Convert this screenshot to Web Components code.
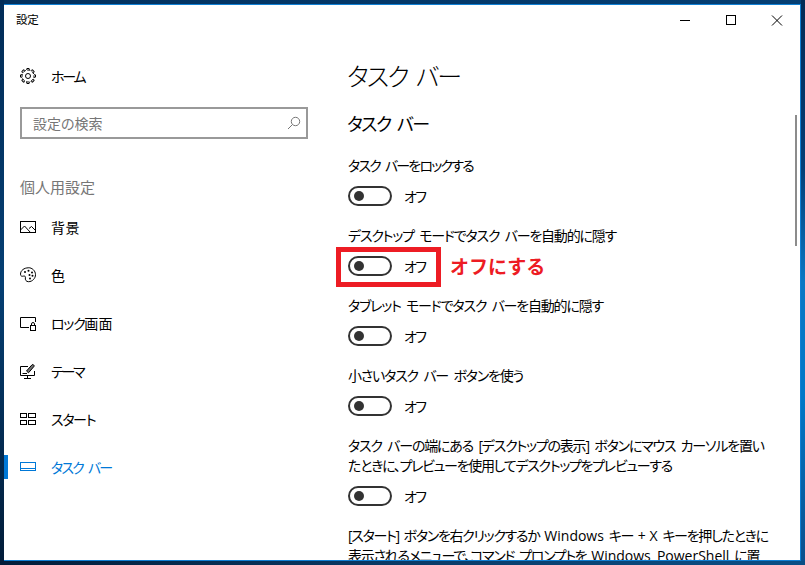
<!DOCTYPE html>
<html lang="ja"><head><meta charset="utf-8">
<style>
html,body{margin:0;height:100%;overflow:hidden}
body{font-family:"Open Sans","Noto Sans CJK JP","Liberation Sans",sans-serif;font-feature-settings:"palt";color:#000}
</style></head><body>
<settings-desktop>
  <settings-window>
    <settings-nav slot="nav"></settings-nav>
    <settings-content slot="content"></settings-content>
  </settings-window>
</settings-desktop>
<script>
const def=(n,html)=>customElements.define(n,class extends HTMLElement{constructor(){super();this.attachShadow({mode:'open'}).innerHTML=typeof html==='function'?html(this):html}});

def('settings-desktop',`<style>:host{display:block;width:805px;height:565px;box-sizing:border-box;padding:4px;position:relative;
background:linear-gradient(90deg,#03315e 0,#053f73 100%)}
.r{position:absolute;right:0;top:0;width:4px;height:565px;background:linear-gradient(180deg,#022c57 0,#023f78 30%,#0a78c4 50%,#0078c8 70%,#0a4f8c 100%)}
.b{position:absolute;left:0;top:561px;width:805px;height:4px;background:linear-gradient(90deg,#021c38,#0a3a66 50%,#0a4f86)}
.l{position:absolute;left:0;top:0;width:4px;height:565px;background:linear-gradient(180deg,#022c57,#053f73 50%,#021c38)}
</style><slot></slot><div class="r"></div><div class="b"></div><div class="l"></div>`);

def('settings-window',`<style>:host{display:grid;grid-template-columns:328px 1fr;grid-template-rows:28px 1fr;height:100%;box-sizing:border-box;background:#fff;border:1px solid #0f7fd3;border-width:1px 1px 1px 0;overflow:hidden;position:relative;width:797px}
.title{grid-column:1/3;display:flex;align-items:center;justify-content:space-between;padding-left:12px;height:28px}
.title span{font-size:11.500px;letter-spacing:-.2px}
.btns{display:flex;align-self:flex-start}
.btns svg{width:46px;height:30px;display:block}
.scroll{position:absolute;right:3px;top:110px;width:2px;height:131px;background:#8c8c8c}
main{display:block;overflow:hidden;min-height:0}
</style>
<div class="title"><span>設定</span><div class="btns">
<svg viewBox="0 0 46 30"><path d="M18 15.500h10" stroke="#000" fill="none"/></svg>
<svg viewBox="0 0 46 30"><rect x="18.500" y="10.500" width="9" height="9" stroke="#000" fill="none"/></svg>
<svg viewBox="0 0 46 30"><path d="M18 10.500l10 10M28 10.500l-10 10" stroke="#000" fill="none"/></svg>
</div></div>
<slot name="nav"></slot><main><slot name="content"></slot></main><div class="scroll"></div>`);

const teeth=[0,45,90,135,180,225,270,315].map(a=>`<path transform="rotate(${a} 8 8)" d="M6.500 1.800L6.900.5h2.200l.4 1.300"/>`).join('');
const icons={
home:`<g fill="none" stroke="#000"><circle cx="8" cy="8" r="2.500"/><circle cx="8" cy="8" r="6" stroke-dasharray="3.400 1.310" stroke-dashoffset="1.700"/>${teeth}</g>`,
bg:`<g fill="none" stroke="#000"><rect x=".5" y="2.500" width="15" height="11"/><path d="M.5 11l4-4 6 6.500M9 9.500l2.500-2 4 4"/></g>`,
color:`<g fill="none" stroke="#000"><path d="M8.500 .8C4 .8.5 3.500.5 7.200c0 2 1.500 2.300 3 1.900 1.300-.3 2.300.4 1.900 1.700-.5 1.900.7 3.900 3.100 3.900 4 0 7-3.500 7-7 0-4-3.500-7-7-7z"/></g><g fill="#000"><circle cx="5" cy="5" r="1"/><circle cx="8.500" cy="3.800" r="1"/><circle cx="12" cy="5.500" r="1"/><circle cx="12.500" cy="8.800" r="1"/><circle cx="9.500" cy="8" r="1"/><circle cx="10" cy="11.500" r="1"/></g>`,
lock:`<g fill="none" stroke="#000"><path d="M9 12.500H.5v-10h15V7"/><rect x="10.500" y="10.500" width="5" height="5"/><path d="M11.500 10.500V9a1.500 1.500 0 013 0v1.500"/></g>`,
theme:`<g fill="none" stroke="#000"><path d="M8 3.500H.5v9h14V8M7.500 12.500v2.500M4 15.500h7"/><path d="M6.500 8L12 1.800c.8-.9 2.700.6 2 1.600L8.500 9.800z" fill="#000" fill-opacity=".55"/><path d="M2.500 10.500h4.500"/></g>`,
start:`<g fill="none" stroke="#000"><rect x=".5" y="2.500" width="6" height="4"/><rect x="8.500" y="2.500" width="7" height="4"/><rect x=".5" y="9.500" width="6" height="4"/><rect x="8.500" y="9.500" width="7" height="4"/></g>`,
taskbar:`<g fill="none" stroke="#0078d7"><rect x=".5" y="3.500" width="15" height="8"/><path d="M.5 9.500h15"/></g>`
};
def('nav-item',el=>`<style>:host{display:flex;align-items:center;height:48px;position:relative;padding-left:16px;font-size:14px;letter-spacing:-1.300px;word-spacing:3px;color:#000;white-space:nowrap}
svg{width:16px;height:16px;margin-right:15px;flex:none}
:host([active]){color:#0078d7;letter-spacing:-1.800px}
:host([active])::before{content:"";position:absolute;left:0;top:12px;width:4px;height:24px;background:#0078d7}
:host([tight]){letter-spacing:-2.200px}
</style><svg viewBox="0 0 16 16">${icons[el.getAttribute('icon')]}</svg><slot></slot>`);

def('search-box',`<style>:host{display:flex;align-items:center;justify-content:space-between;box-sizing:border-box;width:288px;height:32px;border:2px solid #999;padding:0 5px 0 11px;font-size:14px;color:#767676}
svg{width:14px;height:14px}</style><slot></slot><svg viewBox="0 0 14 14" fill="none" stroke="#767676"><circle cx="8.500" cy="5.500" r="4.200"/><path d="M5.500 8.500L1 13"/></svg>`);

def('settings-nav',`<style>:host{display:block;font-feature-settings:"palt"}
.s{margin:7px 0 0 16px}
h2{font-weight:400;font-size:15px;color:#767676;margin:38px 0 0 16px;line-height:20px}
.home{margin-top:19px}
.list{margin-top:6px;display:block}
</style>
<nav-item class="home" icon="home" tight>ホーム</nav-item>
<search-box class="s">設定の検索</search-box>
<h2>個人用設定</h2>
<div class="list">
<nav-item icon="bg"><span style="letter-spacing:.5px">背景</span></nav-item>
<nav-item icon="color">色</nav-item>
<nav-item icon="lock">ロック<span style="letter-spacing:.2px">画面</span></nav-item>
<nav-item icon="theme" tight>テーマ</nav-item>
<nav-item icon="start">スタート</nav-item>
<nav-item icon="taskbar" active>タスク バー</nav-item>
</div>`);

def('toggle-row',`<style>:host{display:block;font-size:14px;line-height:20px;font-feature-settings:"palt";letter-spacing:-1.200px;word-spacing:3px;white-space:nowrap}
.l{display:block}
.t{display:flex;align-items:center;margin-top:10px;height:20px;position:relative}
.sw{box-sizing:border-box;width:44px;height:20px;border:2px solid #333;border-radius:10px;display:flex;align-items:center;padding-left:4px}
.sw i{width:10px;height:10px;border-radius:50%;background:#333}
.o{margin:1px 0 0 12px;letter-spacing:-1.500px}
</style><span class="l"><slot></slot></span><div class="t"><span class="sw"><i></i></span><span class="o">オフ</span><slot name="note"></slot></div>`);

def('call-out',`<style>:host{position:absolute;left:-12px;top:-9px;width:105px;height:40px;box-sizing:border-box;border:5px solid #ed1c24;display:block}
span{position:absolute;left:109px;top:1px;white-space:nowrap;color:#ed1c24;font-weight:700;font-size:19px;line-height:28px;letter-spacing:0;word-spacing:0;font-feature-settings:normal}
</style><span><slot></slot></span>`);

def('settings-content',`<style>:host{display:block;font-feature-settings:"palt"}
h1{font-weight:300;font-size:25px;line-height:40px;margin:23px 0 0 15px;letter-spacing:-2.100px;word-spacing:4px}
h2{font-weight:400;font-size:18px;line-height:28px;margin:14px 0 0 15px;letter-spacing:-1.500px;word-spacing:3px}
.rows{margin:18px 0 0 16px;width:440px;display:grid;gap:20px}
.cut{font-size:14px;line-height:20px;letter-spacing:-1.300px;word-spacing:2.500px;white-space:nowrap}
b{font-weight:400;letter-spacing:0}
i{font-style:normal;letter-spacing:-1.300px}
.a{letter-spacing:-1.800px}
</style>
<h1>タスク バー</h1><h2>タスク バー</h2>
<div class="rows">
<toggle-row><span class="a">タスク バーをロックする</span></toggle-row>
<toggle-row>デスクトップ モードでタスク バーを自動的に隠す<call-out slot="note">オフにする</call-out></toggle-row>
<toggle-row>タブレット モードでタスク バーを自動的に隠す</toggle-row>
<toggle-row>小さいタスク バー ボタンを使う</toggle-row>
<toggle-row>タスク バーの端にある [デスクトップの表示] ボタンにマウス カーソルを置い<br><i>たときに、プレビューを使用してデスクトップをプレビューする</i></toggle-row>
<div class="cut">[スタート] ボタンを右クリックするか <b>Windows</b> キー + <b>X</b> キーを押したときに<br>表示されるメニューで、コマンド プロンプトを <b>Windows PowerShell</b> に置</div>
</div>`);
</script>
</body></html>
